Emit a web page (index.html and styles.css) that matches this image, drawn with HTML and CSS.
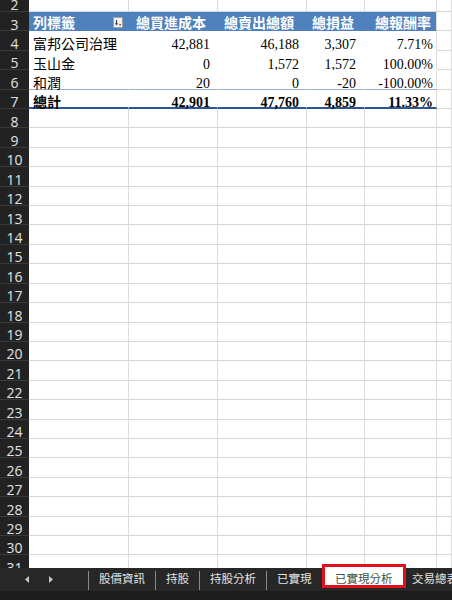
FILE: index.html
```html
<!DOCTYPE html>
<html lang="zh-Hant">
<head>
<meta charset="utf-8">
<title>已實現分析</title>
<link rel="stylesheet" href="styles.css">
</head>
<body>
<div class="sheet">
  <div class="grid">
    <div class="row"><div class="rh">2</div><div class="c ca"></div><div class="c cb"></div><div class="c cc"></div><div class="c cd"></div><div class="c ce"></div><div class="c cf"></div></div>
    <div class="row">
      <div class="rh">3</div>
      <div class="c ca ph hfirst"><span>列標籤</span>
        <svg class="fbtn" width="10" height="11" viewBox="0 0 10 11"><rect x="0.5" y="0.5" width="9" height="10" fill="#f3f3f3" stroke="#a0a0a0"/><path d="M3.5 3v4.5" stroke="#333" stroke-width="1"/><path d="M2 6.3h3l-1.5 2.2z" fill="#333"/><path d="M5.8 7.3h2.6l-1.3 1.4z" fill="#333"/></svg>
      </div>
      <div class="c cb ph num">總買進成本</div>
      <div class="c cc ph num">總賣出總額</div>
      <div class="c cd ph num">總損益</div>
      <div class="c ce ph num">總報酬率</div>
      <div class="c cf"></div>
    </div>
    <div class="row"><div class="rh">4</div><div class="c ca p">富邦公司治理</div><div class="c cb p num">42,881</div><div class="c cc p num">46,188</div><div class="c cd p num">3,307</div><div class="c ce p num">7.71%</div><div class="c cf"></div></div>
    <div class="row"><div class="rh">5</div><div class="c ca p">玉山金</div><div class="c cb p num">0</div><div class="c cc p num">1,572</div><div class="c cd p num">1,572</div><div class="c ce p num">100.00%</div><div class="c cf"></div></div>
    <div class="row"><div class="rh">6</div><div class="c ca p last">和潤</div><div class="c cb p last num">20</div><div class="c cc p last num">0</div><div class="c cd p last num">-20</div><div class="c ce p last num">-100.00%</div><div class="c cf"></div></div>
    <div class="row"><div class="rh">7</div><div class="c ca p tot">總計</div><div class="c cb p tot num">42,901</div><div class="c cc p tot num">47,760</div><div class="c cd p tot num">4,859</div><div class="c ce p tot num">11.33%</div><div class="c cf"></div></div>
    <div class="row"><div class="rh">8</div><div class="c ca"></div><div class="c cb"></div><div class="c cc"></div><div class="c cd"></div><div class="c ce"></div><div class="c cf"></div></div>
    <div class="row"><div class="rh">9</div><div class="c ca"></div><div class="c cb"></div><div class="c cc"></div><div class="c cd"></div><div class="c ce"></div><div class="c cf"></div></div>
    <div class="row"><div class="rh">10</div><div class="c ca"></div><div class="c cb"></div><div class="c cc"></div><div class="c cd"></div><div class="c ce"></div><div class="c cf"></div></div>
    <div class="row"><div class="rh">11</div><div class="c ca"></div><div class="c cb"></div><div class="c cc"></div><div class="c cd"></div><div class="c ce"></div><div class="c cf"></div></div>
    <div class="row"><div class="rh">12</div><div class="c ca"></div><div class="c cb"></div><div class="c cc"></div><div class="c cd"></div><div class="c ce"></div><div class="c cf"></div></div>
    <div class="row"><div class="rh">13</div><div class="c ca"></div><div class="c cb"></div><div class="c cc"></div><div class="c cd"></div><div class="c ce"></div><div class="c cf"></div></div>
    <div class="row"><div class="rh">14</div><div class="c ca"></div><div class="c cb"></div><div class="c cc"></div><div class="c cd"></div><div class="c ce"></div><div class="c cf"></div></div>
    <div class="row"><div class="rh">15</div><div class="c ca"></div><div class="c cb"></div><div class="c cc"></div><div class="c cd"></div><div class="c ce"></div><div class="c cf"></div></div>
    <div class="row"><div class="rh">16</div><div class="c ca"></div><div class="c cb"></div><div class="c cc"></div><div class="c cd"></div><div class="c ce"></div><div class="c cf"></div></div>
    <div class="row"><div class="rh">17</div><div class="c ca"></div><div class="c cb"></div><div class="c cc"></div><div class="c cd"></div><div class="c ce"></div><div class="c cf"></div></div>
    <div class="row"><div class="rh">18</div><div class="c ca"></div><div class="c cb"></div><div class="c cc"></div><div class="c cd"></div><div class="c ce"></div><div class="c cf"></div></div>
    <div class="row"><div class="rh">19</div><div class="c ca"></div><div class="c cb"></div><div class="c cc"></div><div class="c cd"></div><div class="c ce"></div><div class="c cf"></div></div>
    <div class="row"><div class="rh">20</div><div class="c ca"></div><div class="c cb"></div><div class="c cc"></div><div class="c cd"></div><div class="c ce"></div><div class="c cf"></div></div>
    <div class="row"><div class="rh">21</div><div class="c ca"></div><div class="c cb"></div><div class="c cc"></div><div class="c cd"></div><div class="c ce"></div><div class="c cf"></div></div>
    <div class="row"><div class="rh">22</div><div class="c ca"></div><div class="c cb"></div><div class="c cc"></div><div class="c cd"></div><div class="c ce"></div><div class="c cf"></div></div>
    <div class="row"><div class="rh">23</div><div class="c ca"></div><div class="c cb"></div><div class="c cc"></div><div class="c cd"></div><div class="c ce"></div><div class="c cf"></div></div>
    <div class="row"><div class="rh">24</div><div class="c ca"></div><div class="c cb"></div><div class="c cc"></div><div class="c cd"></div><div class="c ce"></div><div class="c cf"></div></div>
    <div class="row"><div class="rh">25</div><div class="c ca"></div><div class="c cb"></div><div class="c cc"></div><div class="c cd"></div><div class="c ce"></div><div class="c cf"></div></div>
    <div class="row"><div class="rh">26</div><div class="c ca"></div><div class="c cb"></div><div class="c cc"></div><div class="c cd"></div><div class="c ce"></div><div class="c cf"></div></div>
    <div class="row"><div class="rh">27</div><div class="c ca"></div><div class="c cb"></div><div class="c cc"></div><div class="c cd"></div><div class="c ce"></div><div class="c cf"></div></div>
    <div class="row"><div class="rh">28</div><div class="c ca"></div><div class="c cb"></div><div class="c cc"></div><div class="c cd"></div><div class="c ce"></div><div class="c cf"></div></div>
    <div class="row"><div class="rh">29</div><div class="c ca"></div><div class="c cb"></div><div class="c cc"></div><div class="c cd"></div><div class="c ce"></div><div class="c cf"></div></div>
    <div class="row"><div class="rh">30</div><div class="c ca"></div><div class="c cb"></div><div class="c cc"></div><div class="c cd"></div><div class="c ce"></div><div class="c cf"></div></div>
    <div class="row"><div class="rh">31</div><div class="c ca"></div><div class="c cb"></div><div class="c cc"></div><div class="c cd"></div><div class="c ce"></div><div class="c cf"></div></div>
  </div>
</div>
<div class="tabbar">
  <div class="nav">
    <svg width="4" height="7" viewBox="0 0 4 7"><path d="M4 0v7L0 3.5z" fill="#c8c8c8"/></svg>
    <svg width="4" height="7" viewBox="0 0 4 7"><path d="M0 0v7l4-3.5z" fill="#c8c8c8"/></svg>
  </div>
  <div class="sep"></div>
  <div class="tab">股價資訊</div>
  <div class="sep"></div>
  <div class="tab">持股</div>
  <div class="sep"></div>
  <div class="tab">持股分析</div>
  <div class="sep"></div>
  <div class="tab">已實現</div>
  <div class="tab active">已實現分析</div>
  <div class="tab next">交易總表</div>
</div>
</body>
</html>
```
FILE: styles.css
```css
* { box-sizing: border-box; }

body {
  margin: 0;
  width: 452px;
  height: 600px;
  overflow: hidden;
  background: #ffffff;
  font-family: "Liberation Serif", "Noto Sans CJK TC", serif;
  font-size: 14px;
  color: #000;
}

.sheet {
  height: 568px;
  overflow: hidden;
  background: #fff;
}

.grid { margin-top: -7.4px; }

.row {
  display: flex;
  height: 19.42px;
}

.rh {
  flex: none;
  width: 29px;
  background: #222222;
  color: #e2e2e2;
  font-family: "Open Sans", sans-serif;
  font-size: 14px;
  line-height: 19px;
  padding-top: 2.5px;
  text-align: center;
  border-bottom: 1px solid #3a3a3a;
}

.c {
  flex: none;
  border-right: 1px solid #dcdcdc;
  border-bottom: 1px solid #d6d6d6;
  line-height: 19px;
  padding-top: 4px;
  white-space: nowrap;
}

.ca { width: 100px; padding-left: 4px; }
.cb { width: 89px; padding-right: 7px; }
.cc { width: 89px; padding-right: 7px; }
.cd { width: 58px; padding-right: 8px; }
.ce { width: 72px; padding-right: 3px; }
.cf { flex: 1; }

.num { text-align: right; }

/* pivot table body */
.p {
  background: #fff;
  border-right-color: transparent;
  border-bottom-color: transparent;
}
.ce.p { border-right-color: #dcdcdc; }
.p.last { border-bottom-color: #95b3d7; }
.p.tot {
  font-weight: bold;
  padding-top: 3.5px;
  border-bottom: 2px solid #2c5592;
}

/* pivot header */
.ph {
  background: #4f81bd;
  color: #fff;
  font-weight: bold;
  padding-top: 1.5px;
  border-right-color: #4f81bd;
  border-bottom-color: #4f81bd;
}
.ce.ph { border-right-color: #dcdcdc; }
.cb.ph { padding-right: 11px; }
.cc.ph { padding-right: 12px; }
.cd.ph { padding-right: 10px; }
.ce.ph { padding-right: 5px; }

.hfirst {
  display: flex;
  justify-content: space-between;
  align-items: flex-start;
  padding-right: 5px;
}
.fbtn { margin-top: 3.5px; flex: none; }

/* sheet tabs */
.tabbar {
  height: 32px;
  display: flex;
  align-items: flex-start;
  background: linear-gradient(#272727 0, #272727 23px, #1c1c1c 23px, #1c1c1c 100%);
  font-family: "Noto Sans CJK TC", sans-serif;
  font-size: 11.5px;
  color: #e6e6e6;
}

.nav {
  width: 88px;
  height: 23px;
  flex: none;
  display: flex;
  align-items: center;
  padding-left: 25px;
  gap: 20px;
}

.sep {
  flex: none;
  width: 1px;
  height: 19px;
  margin-top: 3px;
  background: #8a8a8a;
}

.tab {
  flex: none;
  height: 23px;
  line-height: 21px;
  padding: 0 10px;
  white-space: nowrap;
}

.tab.active {
  margin-top: -4px;
  height: 24px;
  line-height: 16px;
  padding: 3px 10.5px 0;
  background: #fff;
  color: #3a5446;
  border: 3px solid #e3101b;
}

.tab.next { padding-left: 6px; }
```
